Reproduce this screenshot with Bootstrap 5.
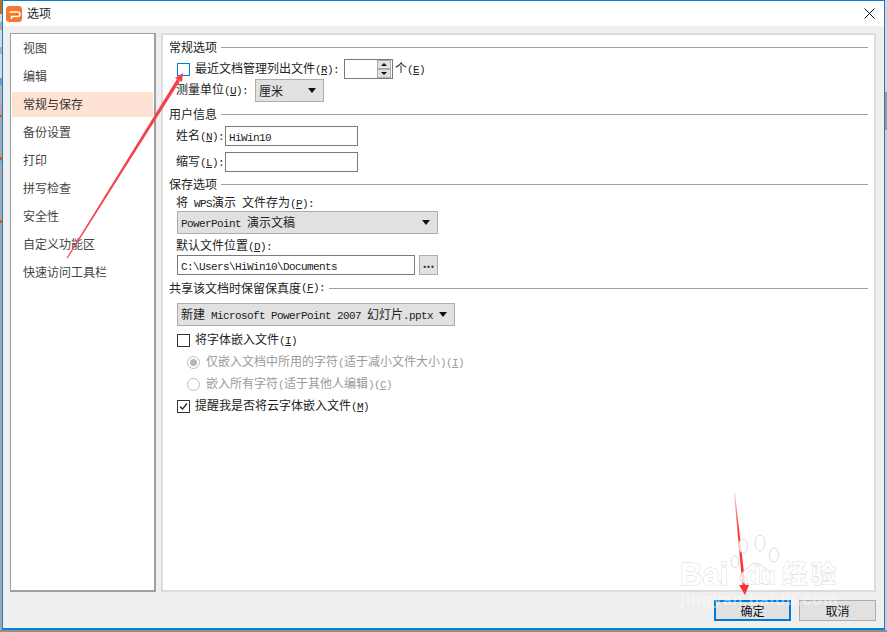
<!DOCTYPE html>
<html lang="zh">
<head>
<meta charset="utf-8">
<title>选项</title>
<link href="https://cdn.jsdelivr.net/npm/bootstrap@5.3.0/dist/css/bootstrap.min.css" rel="stylesheet">
<style>
html,body{height:632px;overflow:hidden}
body{position:relative;font:12px/16px "Noto Sans CJK SC","Liberation Sans",sans-serif;color:#222;
 background:linear-gradient(#8f8f8f,#8f8f8f) 0 100%/100% 2px no-repeat,
 linear-gradient(#d6d6d6 0 92px,#9a9a9a 92px 130px,#cfcfcf 130px) 100% 0/2px 100% no-repeat,
 linear-gradient(#b5702f 0 14px,#d8d8d8 14px 22px,#aaa 22px 30px,#d8d8d8 30px 47px,#b0b0b0 47px 54px,#d8d8d8 54px 78px,#7f95d8 78px 85px,#b5b5b5 85px 105px,#c79ab0 105px 112px,#aaa 112px 115px,#c8602a 115px 117px,#aaa 117px 157px,#c8602a 157px 160px,#6ab0e0 160px 163px,#aaa 163px 220px,#c8602a 220px 223px,#a6a6a6 223px) 0 0/2px 100% no-repeat,#b0b0b0}
.lat{font-family:"Liberation Mono",monospace;font-size:11px;letter-spacing:-.6px;white-space:pre}
.dlg{margin-left:2px;width:883px;height:630px;background:#efefef;border:1px solid #0f7fd4;border-bottom-width:2px}
.ttl{height:25px;background:#fff;padding-left:3px}
.logo{width:16px;height:16px;flex:none}
.ttxt{margin-left:5px;margin-bottom:2px}
.closer{margin-right:9px}
.bod{height:566px;padding:7px 8px 0 7px;gap:5px}
.side{width:146px;background:#fff;border:solid #a0a0a0;border-width:1px 2px 2px 1px;color:#444;flex:none}
.side div{height:28px;line-height:28px;padding-left:11px;margin-left:1px;width:141px}
.side .on{background:#fee2d3;color:#333;height:25px;line-height:23px;margin-top:2px;margin-bottom:1px}
.pane{flex:1;background:#fff;border:2px solid #dcdcdc;padding-left:6px;padding-right:6px;min-width:0;height:559px}
.sec{height:16px;margin-top:5px}
.sec::after{content:"";flex:1;height:1px;background:#a0a0a0;margin-left:4px}
.lbl{height:16px}
.cb{width:13px;height:13px;border:1px solid #333;background:#fff;flex:none;margin-left:1px;margin-right:5px}
.cb.act{border-color:#0078d7}
.ind{margin-left:7px}
.box-row{margin-left:8px}
.txt{background:#fff;border:1px solid #7a7a7a;height:20px;padding-left:3px;line-height:18px;flex:none}
.sel{background:#e1e1e1;border:1px solid #adadad;height:23px;padding:0 7px 0 3px;line-height:21px;flex:none}
.sel::after{content:"";border:4px solid transparent;border-top:5px solid #111;border-bottom:0;margin-left:auto}
.dots{background:#e1e1e1;border:1px solid #adadad;width:19px;height:20px;margin-left:4px;line-height:13px;text-align:center;font-weight:700;flex:none}
.spin{width:49px;height:20px;margin-left:5px;margin-right:2px;padding:0 1px 0 0}
.spb{width:14px;height:9px;background:#e1e1e1;border:1px solid #adadad}
.spb::before{content:"";border:3px solid transparent}
.spb.up::before{border-bottom:3px solid #111;border-top:0}
.spb.dn::before{border-top:3px solid #111;border-bottom:0}
.dis{color:#9a9a9a}
.rad{width:13px;height:13px;border:1px solid #bcbcbc;border-radius:50%;flex:none;margin-right:6px;background:#fff;position:relative}
.rad.pick::after{content:"";position:absolute;inset:2px;border-radius:50%;background:#b5b5b5}
.acts{height:21px;padding-right:8px;gap:8px;margin-top:8px}
.act-btn{width:77px;height:21px;background:#e1e1e1;border:1px solid #adadad;line-height:19px;text-align:center;color:#111}
.act-btn.dft{border:2px solid #0078d7;line-height:17px}
.ovl{position:absolute;left:0;top:0;pointer-events:none}
.wm text{fill:#fff;stroke:#cfcfcf;stroke-width:.9;paint-order:stroke}
.wm .big{font:700 31px "Liberation Sans",sans-serif}
.wm .du{font:700 24px "Liberation Sans",sans-serif}
.wm .cn{font:700 25px "Noto Sans CJK SC",sans-serif}
.wm .url{font:700 16px "Liberation Sans",sans-serif;letter-spacing:.6px;stroke:none;fill-opacity:.55}
.wm ellipse,.wm .palm{fill:#fff;stroke:#d2d2d2;stroke-width:1}
</style>
</head>
<body>
<div class="dlg d-flex flex-column">
  <div class="ttl d-flex align-items-center">
    <svg class="logo" viewBox="0 0 16 16"><rect width="16" height="16" rx="3.500" fill="#f8762e"/><path d="M3.500 6h8.200a1.700 1.700 0 0 1 0 4.500H5.500V13" fill="none" stroke="#fff" stroke-width="1.400"/></svg>
    <span class="ttxt">选项</span>
    <svg class="closer ms-auto" width="11" height="11" viewBox="0 0 11 11"><path d="M.5.5l10 10M10.500.500l-10 10" stroke="#111" stroke-width="1"/></svg>
  </div>
  <div class="bod d-flex">
    <div class="side">
      <div>视图</div><div>编辑</div><div class="on">常规与保存</div><div>备份设置</div><div>打印</div><div>拼写检查</div><div>安全性</div><div>自定义功能区</div><div>快速访问工具栏</div>
    </div>
    <div class="pane">
      <div class="sec d-flex align-items-center" style="margin-top:4px">常规选项</div>
      <div class="d-flex align-items-center ind" style="height:20px;margin-top:4px">
        <span class="cb act"></span><span>最近文档管理列出文件<span class="lat">(<u>R</u>):</span></span>
        <span class="txt spin d-flex flex-column align-items-end justify-content-center"><span class="spb up d-flex align-items-center justify-content-center"></span><span class="spb dn d-flex align-items-center justify-content-center"></span></span>
        <span>个<span class="lat">(<u>E</u>)</span></span>
      </div>
      <div class="d-flex align-items-center ind" style="height:22px">
        <span style="width:79px">测量单位<span class="lat">(<u>U</u>):</span></span>
        <span class="sel d-flex align-items-center" style="width:69px">厘米</span>
      </div>
      <div class="sec d-flex align-items-center">用户信息</div>
      <div class="d-flex align-items-center ind" style="height:20px;margin-top:4px">
        <span style="width:49px">姓名<span class="lat">(<u>N</u>):</span></span><span class="txt" style="width:133px"><span class="lat">HiWin10</span></span>
      </div>
      <div class="d-flex align-items-center ind" style="height:20px;margin-top:6px">
        <span style="width:49px">缩写<span class="lat">(<u>L</u>):</span></span><span class="txt" style="width:133px"></span>
      </div>
      <div class="sec d-flex align-items-center" style="margin-top:4px">保存选项</div>
      <div class="lbl ind" style="margin-top:2px">将<span class="lat"> WPS</span>演示<span class="lat"> </span>文件存为<span class="lat">(<u>P</u>):</span></div>
      <div class="sel d-flex align-items-center box-row" style="width:261px;margin-top:1px"><span><span class="lat">PowerPoint </span>演示文稿</span></div>
      <div class="lbl ind" style="margin-top:3px">默认文件位置<span class="lat">(<u>D</u>):</span></div>
      <div class="d-flex box-row" style="margin-top:2px">
        <span class="txt" style="width:238px"><span class="lat">C:\Users\HiWin10\Documents</span></span>
        <span class="dots">...</span>
      </div>
      <div class="sec d-flex align-items-center" style="margin-top:5px">共享该文档时保留保真度<span class="lat">(<u>F</u>):</span></div>
      <div class="sel d-flex align-items-center box-row" style="width:278px;margin-top:7px"><span>新建<span class="lat"> Microsoft PowerPoint 2007 </span>幻灯片<span class="lat">.pptx</span></span></div>
      <div class="d-flex align-items-center ind" style="height:16px;margin-top:6px"><span class="cb"></span><span>将字体嵌入文件<span class="lat">(<u>I</u>)</span></span></div>
      <div class="d-flex align-items-center dis" style="height:16px;margin-top:6px;margin-left:18px"><span class="rad pick"></span><span>仅嵌入文档中所用的字符<span class="lat">(</span>适于减小文件大小<span class="lat">)(<u>I</u>)</span></span></div>
      <div class="d-flex align-items-center dis" style="height:16px;margin-top:6px;margin-left:18px"><span class="rad"></span><span>嵌入所有字符<span class="lat">(</span>适于其他人编辑<span class="lat">)(<u>C</u>)</span></span></div>
      <div class="d-flex align-items-center ind" style="height:16px;margin-top:6px">
        <span class="cb"><svg class="d-block" width="11" height="11" viewBox="0 0 11 11"><path d="M2 5.500l2.500 2.500L9 2.500" fill="none" stroke="#222" stroke-width="1.200"/></svg></span><span>提醒我是否将云字体嵌入文件<span class="lat">(<u>M</u>)</span></span>
      </div>
    </div>
  </div>
  <div class="acts d-flex justify-content-end">
    <div class="act-btn dft">确定</div><div class="act-btn">取消</div>
  </div>
</div>
<svg class="ovl" width="887" height="632" viewBox="0 0 887 632">
  <defs><linearGradient id="fade" x1="0" y1="0" x2="0" y2="1"><stop offset="0" stop-color="#f44" stop-opacity=".25"/><stop offset=".4" stop-color="#f33"/><stop offset="1" stop-color="#f33"/></linearGradient></defs>
  <path d="M66.500 258L67.500 258.500L180 81L177 79Z" fill="#f4424a"/>
  <path d="M183 73L175 78L182 82Z" fill="#f4424a"/>
  <path d="M734 493L735 493L745.500 586L742.500 586Z" fill="url(#fade)"/>
  <path d="M739 585L749 585L745 595Z" fill="#f33"/>
  <g class="wm" opacity=".82">
    <ellipse cx="743" cy="546" rx="4.500" ry="7"/><ellipse cx="760" cy="543" rx="5" ry="8"/><ellipse cx="774" cy="555" rx="4.500" ry="7"/><ellipse cx="735" cy="562" rx="4" ry="6"/>
    <path class="palm" d="M742 582c-5-4 0-11 6-14 4-6 12-6 16 0 7 3 12 10 7 15-4 3-9 0-14 0s-11 3-15-1z"/>
    <text class="big" x="680" y="585">Bai</text>
    <text class="du" x="746" y="584">du</text>
    <text class="cn" x="782" y="583" textLength="54">经验</text>
    <text class="url" x="680" y="605" textLength="158">jingyan.baidu.com</text>
  </g>
</svg>
</body>
</html>
